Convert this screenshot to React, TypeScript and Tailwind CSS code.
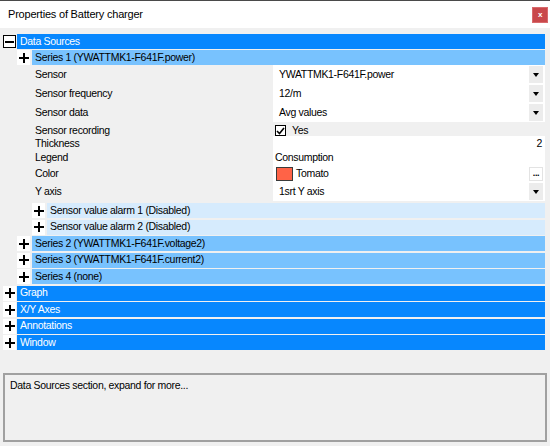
import type { ReactNode } from 'react';

const SECTIONS_AFTER = ['Graph', 'X/Y Axes', 'Annotations', 'Window'];

function PlusIcon() {
  return (
    <svg width="10" height="10" viewBox="0 0 10 10">
      <path d="M5 0v10M0 5h10" stroke="#000" strokeWidth="2" />
    </svg>
  );
}

function PlusCell() {
  return (
    <span className="flex h-[15px] w-[13px] shrink-0 items-center justify-center bg-white">
      <PlusIcon />
    </span>
  );
}

function MinusCell() {
  return (
    <span className="flex h-[13px] w-[13px] shrink-0 items-center justify-center border border-black bg-white">
      <span className="h-[2px] w-[9px] bg-black" />
    </span>
  );
}

function DropButton() {
  return (
    <span className="mr-[2px] flex h-[17px] w-[14px] shrink-0 items-center justify-center bg-[#ececec]">
      <svg width="6" height="4" viewBox="0 0 6 4">
        <path d="M0 0h6L3 4z" fill="#000" />
      </svg>
    </span>
  );
}

function PropRow({
  label,
  h,
  white = true,
  children,
}: {
  label: string;
  h: string;
  white?: boolean;
  children?: ReactNode;
}) {
  return (
    <div className={`flex ${h}`}>
      <div className="flex w-[270px] shrink-0 items-center pl-[32px]">{label}</div>
      <div className={`flex flex-1 items-center ${white ? 'bg-white' : ''}`}>{children}</div>
    </div>
  );
}

function Series({ label }: { label: string }) {
  return (
    <div className="flex h-[15px] items-center pl-[14px]">
      <PlusCell />
      <div className="ml-[2px] flex h-full flex-1 items-center bg-[#78c2fe] pl-[3px]">{label}</div>
    </div>
  );
}

export default function App() {
  return (
    <div className="flex h-[446px] w-[550px] flex-col overflow-hidden bg-[#f0f0f0] font-['Liberation_Sans',Arial,sans-serif] text-[10.5px] tracking-[-0.32px] text-black">
      <div className="h-px bg-[#4a4a4a]" />
      <div className="flex h-[27px] items-center justify-between bg-white pl-[8px] pr-[2px]">
        <span className="text-[11px] tracking-[-0.2px]">Properties of Battery charger</span>
        <button
          type="button"
          className="flex h-[16px] w-[16px] items-center justify-center border border-[#d86a6c] bg-[#c9484b] text-[8px] font-bold leading-none text-white"
        >
          x
        </button>
      </div>

      <div className="flex flex-1 flex-col pl-[3px] pr-[5px] pt-[6px]">
        <div className="flex h-[15px] items-center">
          <MinusCell />
          <div className="ml-px flex h-full flex-1 items-center bg-[#0787fe] pl-[3px] text-white">Data Sources</div>
        </div>

        <div className="mt-px">
          <Series label="Series 1 (YWATTMK1-F641F.power)" />
        </div>

        <PropRow label="Sensor" h="h-[19px]">
          <span className="flex-1 pl-[6px]">YWATTMK1-F641F.power</span>
          <DropButton />
        </PropRow>
        <PropRow label="Sensor frequency" h="h-[19px]">
          <span className="flex-1 pl-[6px]">12/m</span>
          <DropButton />
        </PropRow>
        <PropRow label="Sensor data" h="h-[19px]">
          <span className="flex-1 pl-[6px]">Avg values</span>
          <DropButton />
        </PropRow>
        <PropRow label="Sensor recording" h="h-[14px] pt-[3px]" white={false}>
          <span className="ml-[2px] flex h-[11px] w-[11px] items-center justify-center border border-black bg-white">
            <svg width="9" height="8" viewBox="0 0 9 8">
              <path d="M1 4l2.5 2.5L8 1" fill="none" stroke="#000" strokeWidth="1.6" />
            </svg>
          </span>
          <span className="ml-[6px]">Yes</span>
        </PropRow>
        <PropRow label="Thickness" h="h-[15px]">
          <span className="flex-1 pr-[3px] text-right">2</span>
        </PropRow>
        <PropRow label="Legend" h="h-[14px]">
          <span className="pl-[2px]">Consumption</span>
        </PropRow>
        <PropRow label="Color" h="h-[17px]">
          <span className="ml-[3px] h-[14px] w-[17px] border border-[#3a3a3a] bg-[#ff6347]" />
          <span className="ml-[3px] flex-1">Tomato</span>
          <span className="mr-[2px] flex h-[14px] w-[14px] items-center justify-center border border-[#e3e3e3] bg-white text-[9px] font-bold leading-none">
            ...
          </span>
        </PropRow>
        <PropRow label="Y axis" h="h-[19px]">
          <span className="flex-1 pl-[6px]">1srt Y axis</span>
          <DropButton />
        </PropRow>

        <div className="mt-[2px] flex flex-col gap-[1.5px]">
          {['Sensor value alarm 1 (Disabled)', 'Sensor value alarm 2 (Disabled)'].map((t) => (
            <div key={t} className="flex h-[15px] items-center pl-[29px]">
              <PlusCell />
              <div className="ml-[2px] flex h-full flex-1 items-center bg-[#d6ebfd] pl-[3px]">{t}</div>
            </div>
          ))}
          <Series label="Series 2 (YWATTMK1-F641F.voltage2)" />
          <Series label="Series 3 (YWATTMK1-F641F.current2)" />
          <Series label="Series 4 (none)" />
          {SECTIONS_AFTER.map((t) => (
            <div key={t} className="flex h-[15px] items-center">
              <PlusCell />
              <div className="ml-px flex h-full flex-1 items-center bg-[#0787fe] pl-[3px] text-white">{t}</div>
            </div>
          ))}
        </div>
      </div>

      <div className="mx-[3px] mb-[4px] h-[69px] border-2 border-[#a0a0a0] px-[5px] pt-[3px]">
        Data Sources section, expand for more...
      </div>
    </div>
  );
}
